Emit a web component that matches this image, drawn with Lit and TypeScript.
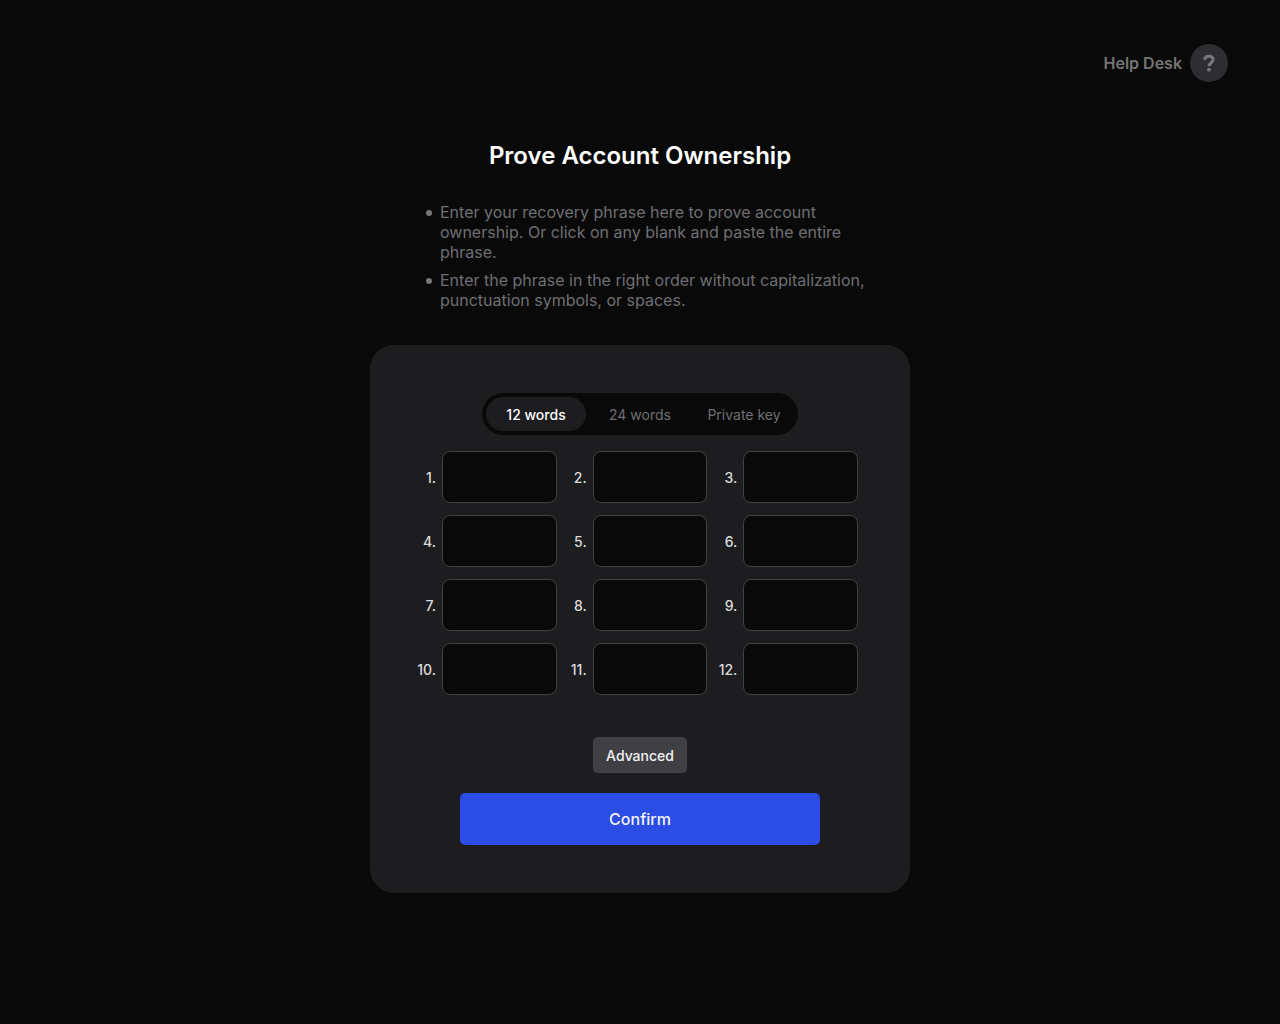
import { LitElement, html, css } from "lit";
import { customElement, state } from "lit/decorators.js";

const MODES = ["12 words", "24 words", "Private key"];

@customElement("app-root")
export class AppRoot extends LitElement {
  @state() private mode = MODES[0];

  static styles = css`
    :host {
      display: block;
      min-height: 100vh;
      box-sizing: border-box;
      background: #090909;
      color: #fff;
      font-family: Inter, "Liberation Sans", sans-serif;
      font-size: 16px;
      line-height: 20px;
    }
    .top {
      display: flex;
      justify-content: flex-end;
      padding: 44px 52px 0;
    }
    .help {
      display: flex;
      align-items: center;
      gap: 8px;
      color: #757575;
      font-weight: 600;
      text-decoration: none;
    }
    .help-icon {
      width: 38px;
      height: 38px;
      display: block;
    }
    main {
      display: flex;
      flex-direction: column;
      align-items: center;
      padding: 58px 16px 131px;
    }
    h1 {
      margin: 0;
      font-size: 24px;
      line-height: 32px;
      font-weight: 600;
    }
    .notes {
      box-sizing: border-box;
      width: 100%;
      max-width: 460px;
      margin: 30px 0 35px;
      padding: 0 0 0 16px;
      list-style: none;
      display: grid;
      gap: 8px;
      color: #6f6f73;
    }
    .note {
      display: flex;
      gap: 8px;
    }
    .note::before {
      content: "";
      flex: none;
      width: 6px;
      height: 6px;
      margin-top: 8px;
      border-radius: 50%;
      background: #77777b;
    }
    .card {
      box-sizing: border-box;
      width: 100%;
      max-width: 540px;
      padding: 48px 44px;
      border-radius: 24px;
      background: #1d1d1f;
      display: flex;
      flex-direction: column;
      align-items: center;
    }
    .tabs {
      display: flex;
      gap: 4px;
      padding: 4px;
      border-radius: 21px;
      background: #090909;
    }
    button {
      border: 0;
      margin: 0;
      font: inherit;
      color: inherit;
      cursor: pointer;
    }
    .tab {
      width: 100px;
      height: 34px;
      padding: 2px 0 0;
      border-radius: 17px;
      background: none;
      font-size: 14px;
      color: #6f6f73;
    }
    .tab.active {
      background: #1d1d1f;
      color: #fff;
      font-weight: 500;
    }
    .words {
      box-sizing: border-box;
      width: 100%;
      margin: 16px 0 42px;
      padding-right: 8px;
      display: grid;
      grid-template-columns: repeat(3, 1fr);
      gap: 12px 8px;
    }
    .word {
      display: grid;
      grid-template-columns: 22px 1fr;
      align-items: center;
      gap: 6px;
      font-size: 14px;
      font-weight: 500;
      text-align: right;
      color: #dcdcde;
    }
    .number {
      padding-top: 2px;
    }
    .field {
      box-sizing: border-box;
      width: 100%;
      min-width: 0;
      height: 52px;
      padding: 0 12px;
      border: 1px solid #414144;
      border-radius: 8px;
      background: #090909;
      color: #fff;
      font: inherit;
    }
    .advanced {
      height: 36px;
      padding: 2px 13px 0;
      border-radius: 5px;
      background: #404044;
      color: #f2f2f4;
      font-size: 14px;
      font-weight: 500;
    }
    .confirm {
      width: 100%;
      max-width: 360px;
      height: 52px;
      margin-top: 20px;
      border-radius: 5px;
      background: #2b4de4;
      color: #f2f2f4;
      font-weight: 500;
    }
  `;

  render() {
    return html`
      <header class="top">
        <a class="help" href="#">
          Help Desk
          <svg class="help-icon" viewBox="0 0 38 38" aria-hidden="true">
            <circle cx="19" cy="19" r="19" fill="#2e2e32" />
            <path d="M14.7 15.800c.2-2.300 1.800-3.600 4.200-3.600 2.500 0 4.200 1.300 4.200 3.500 0 3.100-4.100 3-4.100 6.600" fill="none" stroke="#77777b" stroke-width="3" />
            <circle cx="19" cy="25.700" r="1.900" fill="#77777b" />
          </svg>
        </a>
      </header>
      <main>
        <h1>Prove Account Ownership</h1>
        <ul class="notes">
          <li class="note"><span>Enter your recovery phrase here to prove account ownership. Or click on any blank and paste the entire phrase.</span></li>
          <li class="note"><span>Enter the phrase in the right order without capitalization, punctuation symbols, or spaces.</span></li>
        </ul>
        <section class="card">
          <div class="tabs">
            ${MODES.map(
              (m) => html`<button type="button" class="tab ${m === this.mode ? "active" : ""}"
                aria-pressed=${m === this.mode} @click=${() => (this.mode = m)}>${m}</button>`
            )}
          </div>
          <div class="words">
            ${Array.from({ length: 12 }, (_, i) => i + 1).map(
              (n) => html`<label class="word"><span class="number">${n}.</span><input class="field" type="text" autocomplete="off" readonly /></label>`
            )}
          </div>
          <button type="button" class="advanced">Advanced</button>
          <button type="button" class="confirm">Confirm</button>
        </section>
      </main>
    `;
  }
}
